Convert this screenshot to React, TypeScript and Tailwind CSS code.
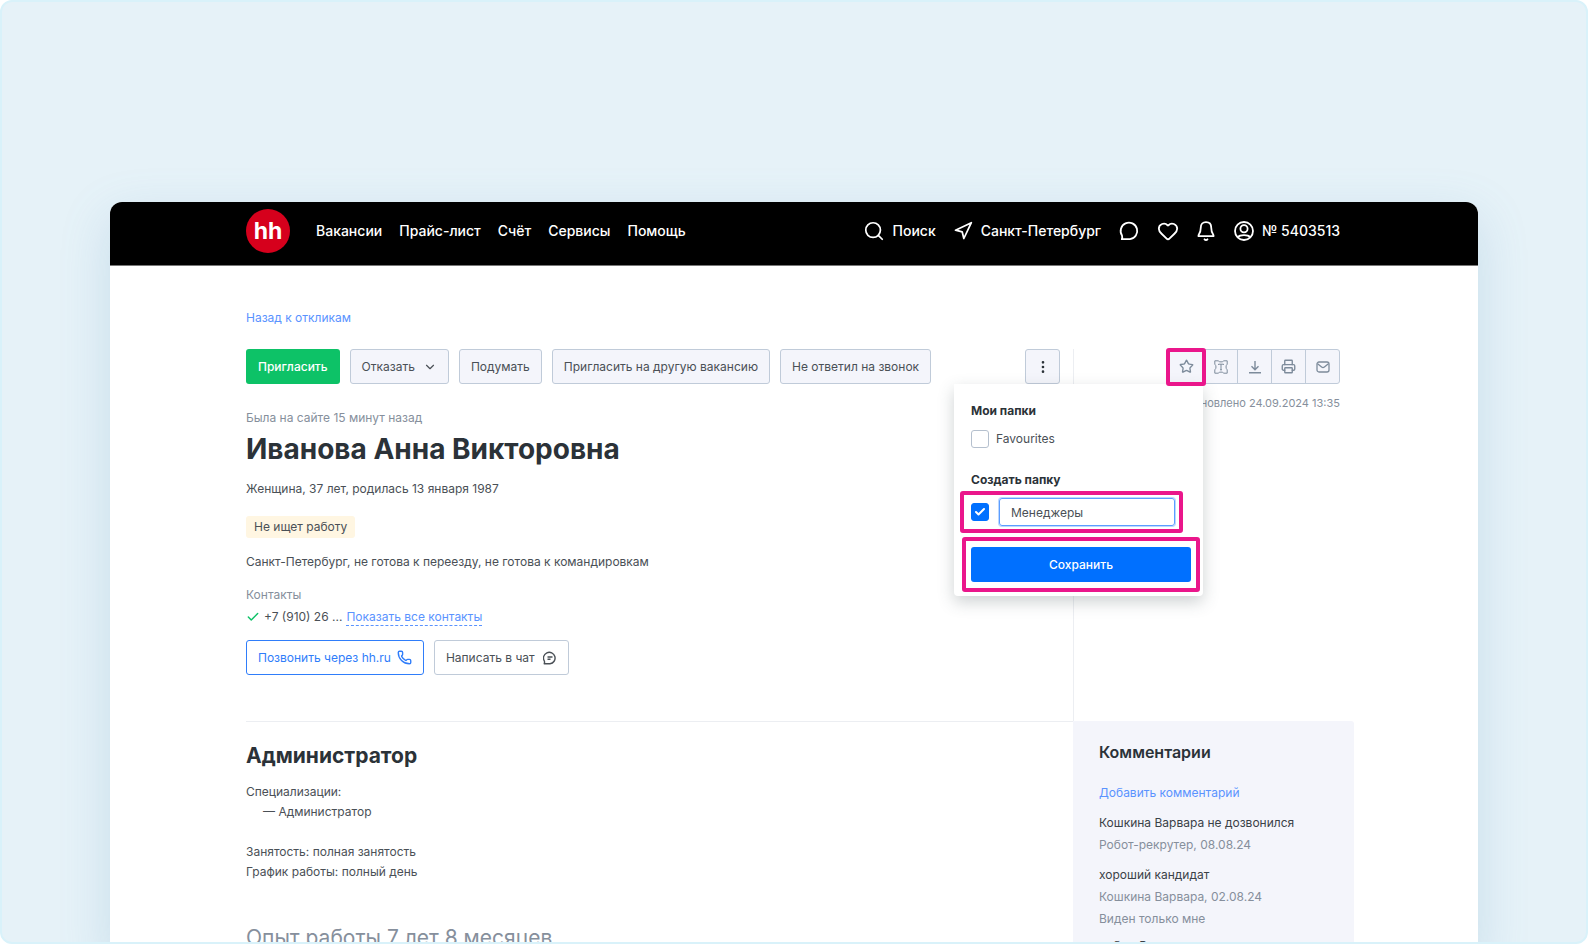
import { useState } from 'react';
import type { ReactNode } from 'react';
import {
  Check,
  ChevronDown,
  EllipsisVertical,
  Heart,
  Navigation,
  Phone,
  Printer,
  Search,
  Star,
} from 'lucide-react';

const NAV = ['Вакансии', 'Прайс-лист', 'Счёт', 'Сервисы', 'Помощь'];

const COMMENTS = [
  { text: 'Кошкина Варвара не дозвонился', author: 'Робот-рекрутер, 08.08.24' },
  { text: 'хороший кандидат', author: 'Кошкина Варвара, 02.08.24', note: 'Виден только мне' },
];

function ChatIcon() {
  return (
    <svg className="size-6" viewBox="0 0 24 24" fill="none" stroke="currentColor" strokeWidth="1.8" strokeLinejoin="round">
      <path d="M3.800 20.200c.6-1.300.5-2.600.2-3.700A8.300 8.300 0 1 1 12 20.200Z" />
    </svg>
  );
}

function BellIcon() {
  return (
    <svg className="size-6" viewBox="0 0 24 24" fill="none" stroke="currentColor" strokeWidth="1.8" strokeLinejoin="round" strokeLinecap="round">
      <path d="M12 3.200c-3.300 0-5.200 2.300-5.200 5.300 0 3.700-.6 5.500-2.300 7.700v1h15v-1c-1.700-2.200-2.300-4-2.300-7.700 0-3-1.900-5.300-5.200-5.300Z" />
      <path d="M10.500 20.300c.8.900 2.200.9 3 0" />
    </svg>
  );
}

function UserIcon() {
  return (
    <svg className="size-6" viewBox="0 0 24 24" fill="none" stroke="currentColor" strokeWidth="1.8">
      <circle cx="12" cy="12" r="9" />
      <circle cx="12" cy="9.800" r="3.600" />
      <path d="M5.800 18.300c1.200-1.500 3.500-2.100 6.200-2.100s5 .6 6.200 2.100" />
    </svg>
  );
}

function ChatSmallIcon() {
  return (
    <svg className="size-3.5" viewBox="0 0 14 14" fill="none" stroke="currentColor" strokeWidth="1.4" strokeLinejoin="round">
      <path d="M1.200 12.800c.5-.9.400-1.700.2-2.600A5.800 5.800 0 1 1 7 12.800Z" />
      <path d="M4.500 6h5M4.500 8.300h3" />
    </svg>
  );
}

function CutIcon() {
  return (
    <svg className="size-3.5" viewBox="0 0 14 14" fill="none" stroke="currentColor" strokeWidth="1" strokeLinejoin="round">
      <path d="M.8.8h3.400c.8 1.500 4.800 1.500 5.600 0h3.400v3.400c-1.600 1.200-1.600 4.400 0 5.600v3.400H9.800c-.8-1.500-4.800-1.500-5.600 0H.8V9.800c1.600-1.200 1.600-4.400 0-5.600Z" />
      <path d="M4.500 5V4.200h5V5M7 4.200v5.600M6 9.800h2" />
    </svg>
  );
}

function DownloadIcon() {
  return (
    <svg className="size-3.5" viewBox="0 0 14 14" fill="none" stroke="currentColor" strokeWidth="1.4">
      <path d="M7 1v8.500M3.500 6.200 7 9.700l3.500-3.500M1 12.700h12" />
    </svg>
  );
}

function MailIcon() {
  return (
    <svg className="size-3.5" viewBox="0 0 14 14" fill="none" stroke="currentColor" strokeWidth="1.3" strokeLinejoin="round">
      <rect x="1" y="2" width="12" height="10" rx="2" />
      <path d="m1.600 3.800 4 3.200c.9.700 1.900.7 2.800 0l4-3.200" />
    </svg>
  );
}

function ActionButton({ children }: { children: ReactNode }) {
  return (
    <button className="flex h-[35px] items-center gap-2 rounded-[3px] border border-[#c0cbd9] bg-[#f4f5fb] px-[11px] text-[#4a5056]">
      {children}
    </button>
  );
}

function ToolButton({ label, children }: { label: string; children: ReactNode }) {
  return (
    <button aria-label={label} className="flex w-[34px] items-center justify-center border-l border-[#c0cbd9] first:border-l-0">
      {children}
    </button>
  );
}

function Checkbox({ id, label, checked, onChange }: { id: string; label?: string; checked: boolean; onChange: () => void }) {
  return (
    <span className="relative flex size-[18px] shrink-0">
      <input
        id={id}
        type="checkbox"
        aria-label={label}
        checked={checked}
        onChange={onChange}
        className="size-[18px] appearance-none rounded-[3px] border border-[#b5c0ce] bg-white checked:border-[#0070ff] checked:bg-[#0070ff]"
      />
      {checked && <Check className="pointer-events-none absolute inset-0 m-auto size-3 text-white" strokeWidth={4} />}
    </span>
  );
}

function FolderMenu() {
  const [favourites, setFavourites] = useState(false);
  const [create, setCreate] = useState(true);
  const [name, setName] = useState('Менеджеры');

  return (
    <div className="absolute top-[35px] right-[151px] z-10 w-[249px] rounded-b bg-white pt-[17px] pb-1 shadow-[0_6px_16px_rgba(60,75,80,0.25)]">
      <h3 className="px-[17px] font-bold text-[#2b3238]">Мои папки</h3>
      <div className="mt-2 flex items-center gap-[7px] px-[17px]">
        <Checkbox id="favourites" checked={favourites} onChange={() => setFavourites(!favourites)} />
        <label htmlFor="favourites">Favourites</label>
      </div>
      <h3 className="mt-[21px] px-[17px] font-bold text-[#2b3238]">Создать папку</h3>
      <div className="mt-px mr-5 ml-1.5 flex h-[42px] items-center gap-2.5 rounded-[3px] border-4 border-[#ea168b] pr-1 pl-[7px]">
        <Checkbox id="create" label="Создать папку" checked={create} onChange={() => setCreate(!create)} />
        <input
          aria-label="Название папки"
          value={name}
          onChange={e => setName(e.target.value)}
          className="h-7 w-full min-w-0 rounded-[3px] border border-[#5c9dff] px-[11px] text-[#4a5056] outline-none ring-1 ring-[#bcd8ff]"
        />
      </div>
      <div className="mt-1 mr-[3px] ml-2 rounded-[3px] border-4 border-[#ea168b] px-[5px] py-1.5">
        <button className="h-[35px] w-full rounded-[3px] bg-[#0070ff] font-medium text-white">Сохранить</button>
      </div>
    </div>
  );
}

function Header() {
  return (
    <header className="h-16 border-b border-[#777] bg-black text-sm font-medium text-white">
      <div className="mx-auto flex h-[58px] max-w-[1096px] items-center pr-0.5">
        <a href="#" className="flex size-11 items-center justify-center rounded-full bg-[#d6001c] text-[23px] font-bold">
          hh
        </a>
        <nav className="ml-[26px] flex gap-[17px]">
          {NAV.map(item => (
            <a key={item} href="#">{item}</a>
          ))}
        </nav>
        <div className="ml-auto flex items-center gap-[17px]">
          <a href="#" className="flex items-center gap-2"><Search className="size-[22px]" strokeWidth={1.9} />Поиск</a>
          <a href="#" className="flex items-center gap-2"><Navigation className="size-5" strokeWidth={2.1} />Санкт-Петербург</a>
          <div className="flex items-center gap-3.5">
            <a href="#" aria-label="Чаты"><ChatIcon /></a>
            <a href="#" aria-label="Избранное" className="px-px"><Heart className="size-[22px]" strokeWidth={2} /></a>
            <a href="#" aria-label="Уведомления"><BellIcon /></a>
            <a href="#" className="flex items-center gap-1.5"><UserIcon />№ 5403513</a>
          </div>
        </div>
      </div>
    </header>
  );
}

export default function App() {
  return (
    <div className="h-screen overflow-hidden rounded-xl border-[2px] border-[#d9f2fa] bg-[#e6f2f8] px-[108px] pt-[200px] font-['Inter',sans-serif] text-xs leading-5 text-[#4a5056]">
      <div className="min-h-full overflow-hidden rounded-t-xl bg-white shadow-[0_16px_50px_rgba(90,150,190,0.22)]">
        <Header />
        <main className="mx-auto max-w-[1124px] pt-[42px] pr-0.5 pl-[14px]">
          <a href="#" className="block w-fit text-[#5a93ff]">Назад к откликам</a>

          <div className="mt-[21px] flex">
            <section className="min-w-0 flex-1 pr-[13px]">
              <div className="flex gap-[10px]">
                <button className="h-[35px] rounded-[3px] bg-[#0dc267] px-3 font-medium text-white">Пригласить</button>
                <ActionButton>Отказать <ChevronDown className="size-3.5" /></ActionButton>
                <ActionButton>Подумать</ActionButton>
                <ActionButton>Пригласить на другую вакансию</ActionButton>
                <ActionButton>Не ответил на звонок</ActionButton>
                <button aria-label="Ещё" className="ml-auto flex size-[35px] items-center justify-center rounded-[3px] border border-[#c0cbd9] bg-[#f4f5fb] text-[#2b3238]">
                  <EllipsisVertical className="size-4" />
                </button>
              </div>
              <p className="mt-6 text-[#868f9c]">Была на сайте 15 минут назад</p>
              <h1 className="mt-[3px] text-[28px] leading-9 font-bold text-[#2b3238]">Иванова Анна Викторовна</h1>
              <p className="mt-3">Женщина, 37 лет, родилась 13 января 1987</p>
              <p className="mt-[17px] w-fit rounded-[3px] bg-[#fff6e2] px-2 py-px">Не ищет работу</p>
              <p className="mt-3.5">Санкт-Петербург, не готова к переезду, не готова к командировкам</p>
              <p className="mt-[13px] text-[#868f9c]">Контакты</p>
              <p className="mt-0.5 flex items-center gap-1">
                <Check className="size-3.5 text-[#0dc267]" strokeWidth={2.5} />
                +7 (910) 26 ...
                <a href="#" className="border-b border-dashed border-[#5a93ff] leading-4 text-[#5a93ff]">Показать все контакты</a>
              </p>
              <div className="mt-[13px] flex gap-[10px] pb-[46px]">
                <button className="flex h-[35px] items-center gap-1.5 rounded-[3px] border border-[#2f7dfa] px-[11px] text-[#2f7dfa]">
                  Позвонить через hh.ru <Phone className="size-[15px]" strokeWidth={2.2} />
                </button>
                <button className="flex h-[35px] items-center gap-2 rounded-[3px] border border-[#c0cbd9] px-[11px]">
                  Написать в чат <ChatSmallIcon />
                </button>
              </div>
            </section>

            <aside className="relative w-[281px] border-l border-[#eceef2] pr-[14px]">
              <div className="flex justify-end">
                <div className="flex h-[35px] rounded-[3px] border border-[#c0cbd9] bg-[#f4f5fb] text-[#7d8b9b]">
                  <ToolButton label="В папку"><Star className="size-[15px]" strokeWidth={2.2} /></ToolButton>
                  <ToolButton label="Сравнить"><CutIcon /></ToolButton>
                  <ToolButton label="Скачать"><DownloadIcon /></ToolButton>
                  <ToolButton label="Печать"><Printer className="size-[15px]" strokeWidth={2.2} /></ToolButton>
                  <ToolButton label="Письмо"><MailIcon /></ToolButton>
                </div>
              </div>
              <span className="pointer-events-none absolute -top-px right-[148px] z-20 h-[38px] w-10 rounded-[3px] border-4 border-[#ea168b]" />
              <p className="mt-[9px] text-right text-[11px] text-[#868f9c]">Обновлено 24.09.2024 13:35</p>
              <FolderMenu />
            </aside>
          </div>

          <div className="flex">
            <section className="min-w-0 flex-1 border-t border-[#eceef2] pt-5">
              <h2 className="text-[21px] leading-7 font-bold text-[#2b3238]">Администратор</h2>
              <p className="mt-3">Специализации:</p>
              <ul className="pl-[17px]">
                <li>— Администратор</li>
              </ul>
              <p className="mt-5">Занятость: полная занятость</p>
              <p>График работы: полный день</p>
              <h2 className="mt-10 text-[21px] leading-8 text-[#868f9c]">Опыт работы 7 лет 8 месяцев</h2>
            </section>
            <aside className="w-[281px] rounded-tr-[3px] bg-[#f4f5fb] px-[26px] pt-[19px]">
              <h2 className="text-base leading-6 font-semibold text-[#2b3238]">Комментарии</h2>
              <a href="#" className="mt-[19px] block text-[#5a93ff]">Добавить комментарий</a>
              {COMMENTS.map(comment => (
                <div key={comment.text} className="mt-[10px]">
                  <p className="text-[#3a4147]">{comment.text}</p>
                  <p className="mt-0.5 text-[#868f9c]">{comment.author}</p>
                  {comment.note && <p className="mt-0.5 text-[#868f9c]">{comment.note}</p>}
                </div>
              ))}
              <p className="mt-[7px] text-[#3a4147]">работ. Вера</p>
            </aside>
          </div>
        </main>
      </div>
    </div>
  );
}
